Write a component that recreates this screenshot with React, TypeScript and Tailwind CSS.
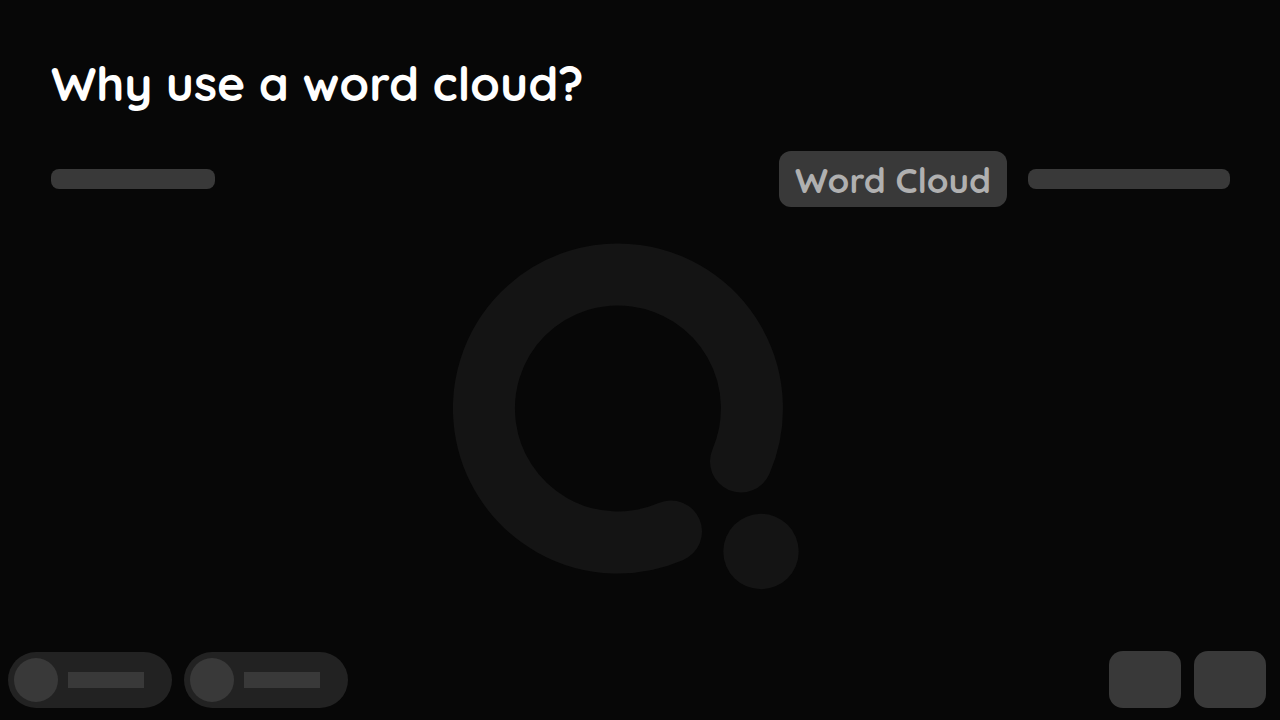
type BarProps = {
  className: string;
};

function Bar({ className }: BarProps) {
  return <div className={`h-5 rounded-lg bg-[#393939] ${className}`} />;
}

function PlayerPill() {
  return (
    <div className="flex h-14 w-41 items-center gap-2.5 rounded-full bg-[#222222] px-1.5">
      <div className="size-11 rounded-full bg-[#393939]" />
      <div className="h-4 w-19 bg-[#393939]" />
    </div>
  );
}

function Logo() {
  return (
    <svg viewBox="0 0 374 347" className="w-[374px]" aria-hidden="true">
      <path
        d="M288 218.5A134 134 0 1 0 218 288.5"
        fill="none"
        stroke="#141414"
        strokeWidth="62"
        strokeLinecap="round"
      />
      <circle cx="308" cy="308.5" r="37.7" fill="#141414" />
    </svg>
  );
}

export default function App() {
  return (
    <div className="flex min-h-screen flex-col bg-[#070707] font-['Quicksand','Lato',sans-serif] font-bold">
      <header className="pt-12 pr-[50px] pl-[51px]">
        <h1 className="text-[48px] leading-[70px] text-white">Why use a word cloud?</h1>
        <div className="mt-[33px] flex items-center justify-between">
          <Bar className="w-41" />
          <div className="flex items-center gap-[21px]">
            <span className="flex h-14 items-center rounded-xl bg-[#393939] px-4 pt-0.5 text-[35px] text-[#b0b0b0]">
              Word Cloud
            </span>
            <Bar className="w-[202px]" />
          </div>
        </div>
      </header>

      <main className="flex flex-1 items-start justify-center pt-9">
        <Logo />
      </main>

      <footer className="flex items-end justify-between pr-3.5 pb-3 pl-2">
        <div className="flex gap-3">
          <PlayerPill />
          <PlayerPill />
        </div>
        <div className="flex gap-[13px]">
          <div className="h-[57px] w-18 rounded-[14px] bg-[#393939]" />
          <div className="h-[57px] w-18 rounded-[14px] bg-[#393939]" />
        </div>
      </footer>
    </div>
  );
}
